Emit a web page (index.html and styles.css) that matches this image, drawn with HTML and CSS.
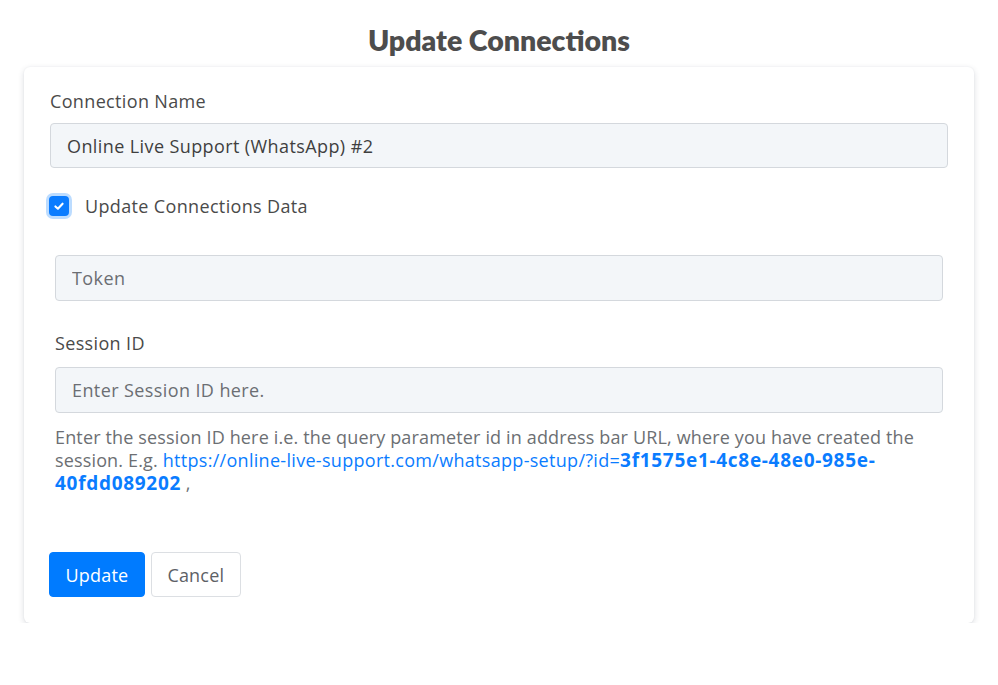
FILE: index.html
```html
<!DOCTYPE html>
<html lang="en">
<head>
<meta charset="utf-8">
<title>Update Connections</title>
<link rel="stylesheet" href="styles.css">
</head>
<body>
<main class="dialog">
  <h1 class="title">Update Connections</h1>
  <form class="card">
    <div class="field">
      <label class="label" for="conn-name">Connection Name</label>
      <input class="input input-filled" id="conn-name" type="text" value="Online Live Support (WhatsApp) #2">
    </div>

    <label class="check">
      <span class="check-box">
        <svg viewBox="0 0 12 12" width="12" height="12" aria-hidden="true">
          <path d="M2.4 6.4 L4.9 8.7 L9.6 3.7" fill="none" stroke="#fff" stroke-width="2.1" stroke-linecap="round" stroke-linejoin="round"/>
        </svg>
      </span>
      <span class="check-text">Update Connections Data</span>
    </label>

    <div class="group">
      <input class="input" type="text" placeholder="Token">

      <div class="field field-session">
        <label class="label" for="session-id">Session ID</label>
        <input class="input" id="session-id" type="text" placeholder="Enter Session ID here.">
      </div>

      <p class="help">Enter the session ID here i.e. the query parameter id in address bar URL, where you have created the<br>session. E.g. <a class="link" href="#">https://online-live-support.com/whatsapp-setup/?id=<b>3f1575e1-4c8e-48e0-985e-<br>40fdd089202</b></a> ,</p>
    </div>

    <div class="actions">
      <button class="btn btn-primary" type="button">Update</button>
      <button class="btn btn-light" type="button">Cancel</button>
    </div>
  </form>
</main>
</body>
</html>
```

FILE: styles.css
```css
* {
  box-sizing: border-box;
}

html,
body {
  margin: 0;
  background: #fff;
}

body {
  font-family: "Open Sans", Lato, sans-serif;
  color: #4a4a4a;
}

.dialog {
  padding: 22px 24px 0;
}

.title {
  margin: 0 0 9px;
  text-align: center;
  font-family: Lato, "Open Sans", sans-serif;
  font-size: 28.5px;
  line-height: 36px;
  font-weight: 800;
  color: #4d4d4d;
}

.card {
  background: #fff;
  border-radius: 6px;
  box-shadow: 0 2px 6px rgba(30, 45, 70, 0.16), 0 0 2px rgba(30, 45, 70, 0.06);
  padding: 22px 26px 26px;
}

.field {
  display: flex;
  flex-direction: column;
}

.label {
  font-size: 18px;
  letter-spacing: 0.35px;
  line-height: 24px;
  color: #4a4a4a;
  margin-bottom: 10px;
}

.field-session .label {
  margin-bottom: 12px;
}

.input {
  display: block;
  width: 100%;
  height: 46px;
  padding: 0 16px;
  font: inherit;
  font-size: 18px;
  letter-spacing: 0.4px;
  color: #454545;
  background: #f3f6f9;
  border: 1px solid #d4d8dd;
  border-radius: 4px;
  outline: none;
}

.input-filled {
  height: 45px;
  color: #3f3f3f;
}

.input::placeholder {
  color: #6b6e73;
}

.check {
  display: flex;
  align-items: center;
  gap: 16px;
  margin: 26px 0 0 -2px;
}

.check-box {
  width: 20px;
  height: 20px;
  border-radius: 4px;
  background: #0a7cff;
  box-shadow: 0 0 0 3px #bcdcff;
  display: flex;
  align-items: center;
  justify-content: center;
  margin-left: 1px;
}

.check-text {
  font-size: 18px;
  letter-spacing: 0.35px;
  line-height: 24px;
  color: #4a4a4a;
}

.group {
  padding: 37px 5px 0;
}

.field-session {
  margin-top: 30px;
}

.help {
  margin: 13px 0 0;
  font-size: 18px;
  letter-spacing: 0.15px;
  line-height: 23px;
  color: #6c6f73;
}

.link {
  color: #0a7cff;
  text-decoration: none;
  letter-spacing: 0.3px;
}

.link b {
  font-weight: 700;
  font-size: 19px;
  line-height: 16px;
  letter-spacing: 0.7px;
}

.actions {
  display: flex;
  gap: 6px;
  margin: 57px 0 0 -1px;
}

.btn {
  height: 45px;
  padding: 0 15.5px;
  font: inherit;
  font-size: 18px;
  letter-spacing: 0.2px;
  border-radius: 4px;
  cursor: pointer;
}

.btn-primary {
  background: #007bff;
  color: #fff;
  border: 1px solid #007bff;
}

.btn-light {
  background: #fff;
  color: #5d6166;
  border: 1px solid #dcdfe3;
}
```
